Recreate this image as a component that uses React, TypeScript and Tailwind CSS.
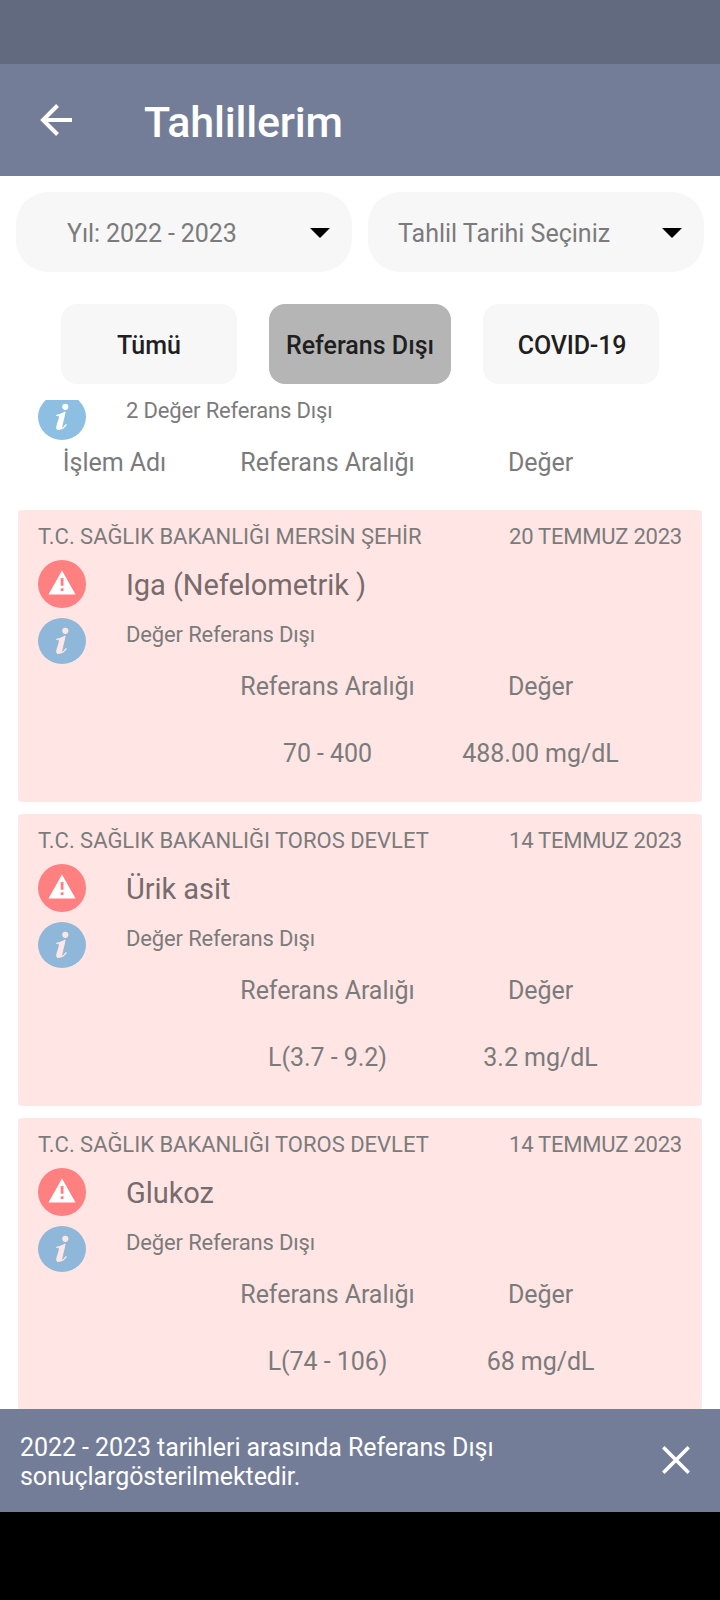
import React from "react";

const filters = [
  { id: 1, label: "Tümü", width: "w-44", active: false },
  { id: 2, label: "Referans Dışı", width: "w-[182px]", active: true },
  { id: 3, label: "COVID-19", width: "w-44 pl-0.5 tracking-[-0.15px]", active: false },
];

const results = [
  {
    id: 1,
    hospital: "T.C. SAĞLIK BAKANLIĞI MERSİN ŞEHİR",
    date: "20 TEMMUZ 2023",
    name: "Iga (Nefelometrik )",
    range: "70 - 400",
    value: "488.00 mg/dL",
  },
  {
    id: 2,
    hospital: "T.C. SAĞLIK BAKANLIĞI TOROS DEVLET",
    date: "14 TEMMUZ 2023",
    name: "Ürik asit",
    range: "L(3.7 - 9.2)",
    value: "3.2 mg/dL",
  },
  {
    id: 3,
    hospital: "T.C. SAĞLIK BAKANLIĞI TOROS DEVLET",
    date: "14 TEMMUZ 2023",
    name: "Glukoz",
    range: "L(74 - 106)",
    value: "68 mg/dL",
  },
];

function WarningIcon() {
  return (
    <svg viewBox="0 0 48 48" className="size-12 shrink-0">
      <circle cx="24" cy="24" r="24" fill="#ff8080" />
      <path
        fillRule="evenodd"
        fill="#fff"
        d="M24 10.5 37.5 34.5h-27zM22.7 18v7.8h2.8V18zM22.7 28.2V31h2.8v-2.8z"
      />
    </svg>
  );
}

function InfoIcon({ color, mark }: { color: string; mark: string }) {
  return (
    <svg viewBox="0 0 48 46" className="h-[46px] w-12 shrink-0">
      <ellipse cx="24" cy="23" rx="24" ry="23" fill={color} />
      <circle cx="27.3" cy="12.8" r="3.1" fill={mark} />
      <path
        d="M18.8 21.4Q22.8 20.8 26.4 18.7L22.6 32Q22 35 23.4 34.8Q25.6 34 28 30.8"
        fill="none"
        stroke={mark}
        strokeWidth="1.4"
        strokeLinecap="round"
      />
      <path
        d="M22 20.6 27.6 18.2 24 33.8Q22 36.4 19.8 36Q17.6 35 18.4 32L20.8 24Q21.3 22.2 20 21.6z"
        fill={mark}
      />
    </svg>
  );
}

function Select({ label, className }: { label: string; className: string }) {
  return (
    <div
      className={`flex h-20 w-[336px] items-center justify-between rounded-[32px] bg-[#f7f7f7] pr-[22px] text-[25px] text-[#7b7b7b] ${className}`}
    >
      <span className="pt-[3px] whitespace-nowrap">{label}</span>
      <svg viewBox="0 0 20 10" className="mt-0.5 h-2.5 w-5">
        <path d="M0 0h20L10 10z" fill="#000" />
      </svg>
    </div>
  );
}

export default function App() {
  return (
    <div className="flex h-[1600px] w-[720px] flex-col overflow-hidden bg-white font-['Roboto',sans-serif]">
      {/* Status bar */}
      <div className="h-16 shrink-0 bg-[#626a7f]" />

      {/* Header */}
      <header className="flex h-28 shrink-0 items-center bg-[#737d97] pl-10 text-white">
        <svg viewBox="0 0 32 32" className="size-8" fill="none" stroke="#fff" strokeWidth="4">
          <path d="M32 16H3M17.5 1.5 3 16l14.5 14.5" />
        </svg>
        <h1 className="ml-[72px] pt-1 text-[43px] leading-[50px] font-medium tracking-[-0.2px]">
          Tahlillerim
        </h1>
      </header>

      {/* Selects */}
      <div className="mt-4 flex shrink-0 gap-4 px-4">
        <Select label="Yıl: 2022 - 2023" className="pl-[51px] tracking-[-0.1px]" />
        <Select label="Tahlil Tarihi Seçiniz" className="pl-[30px]" />
      </div>

      {/* Filters */}
      <div className="mt-8 flex shrink-0 gap-8 pl-[61px]">
        {filters.map((item) => (
          <button
            key={item.id}
            className={`h-20 rounded-2xl pt-1 text-[25px] font-medium whitespace-nowrap text-[#1f1f1f] ${item.width} ${
              item.active ? "bg-[#b5b5b5]" : "bg-[#f7f7f7]"
            }`}
          >
            {item.label}
          </button>
        ))}
      </div>

      {/* List */}
      <main className="mt-4 flex h-[1009px] shrink-0 flex-col overflow-hidden px-[18px] text-[25px] tracking-[-0.05px] text-[#7b7b7b]">
        <div className="-mt-1.5 h-[104px] shrink-0">
          <div className="flex items-start pl-5">
            <InfoIcon color="#8dbfe3" mark="#fff" />
            <span className="mt-1.5 ml-10 text-[22px] leading-[21px] tracking-[-0.15px]">
              2 Değer Referans Dışı
            </span>
          </div>
          <div className="grid grid-cols-[193px_233px_193px] text-center leading-[45px]">
            <span>İşlem Adı</span>
            <span>Referans Aralığı</span>
            <span>Değer</span>
          </div>
        </div>

        {results.map((item) => (
          <article key={item.id} className="mt-3 h-[292px] shrink-0 rounded bg-[#ffe6e5] pt-2.5">
            <div className="flex h-10 justify-between px-5 text-[22px] leading-[33px]">
              <span className="tracking-[-0.01px]">{item.hospital}</span>
              <span className="tracking-[-0.23px]">{item.date}</span>
            </div>
            <div className="flex h-[58px] pl-5">
              <WarningIcon />
              <h2 className="ml-10 text-[29px] leading-[50px] text-[#776b6b]">{item.name}</h2>
            </div>
            <div className="flex pl-5">
              <InfoIcon color="#8eb7d9" mark="#ffe6e5" />
              <span className="ml-10 text-[22px] leading-[33px] tracking-[-0.15px]">
                Değer Referans Dışı
              </span>
            </div>
            <div className="grid grid-cols-[193px_233px_193px] gap-y-[22px] text-center leading-[45px]">
              <span />
              <span>Referans Aralığı</span>
              <span>Değer</span>
              <span />
              <span>{item.range}</span>
              <span>{item.value}</span>
            </div>
          </article>
        ))}
      </main>

      {/* Snackbar */}
      <div className="flex h-[103px] shrink-0 items-center justify-between bg-[#737d97] pr-[30px] pl-5 text-white">
        <p className="w-[500px] pt-[3px] text-[25px] leading-[29px] tracking-[-0.07px]">
          2022 - 2023 tarihleri arasında Referans Dışı sonuçlargösterilmektedir.
        </p>
        <svg viewBox="0 0 28 28" className="mb-px size-7" stroke="#fff" strokeWidth="3.6">
          <path d="M1.3 1.3 26.7 26.7M26.7 1.3 1.3 26.7" />
        </svg>
      </div>

      {/* Navigation bar */}
      <div className="flex-1 bg-black" />
    </div>
  );
}
